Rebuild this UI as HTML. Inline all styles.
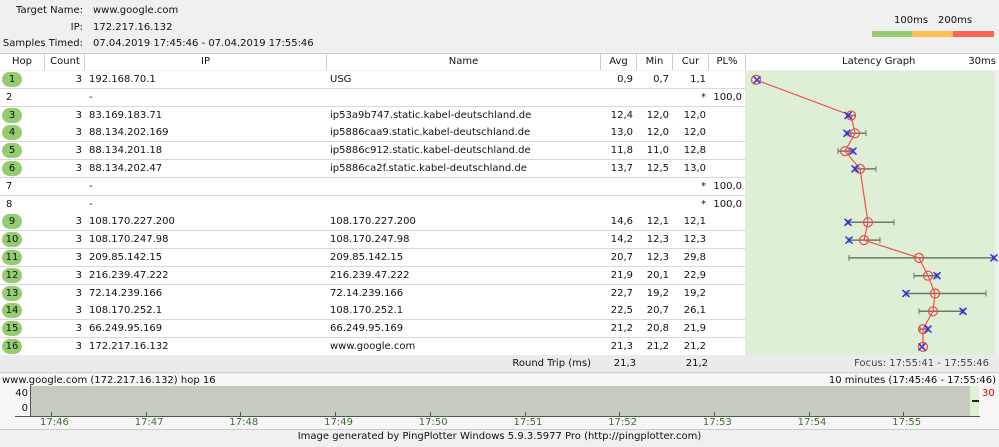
<!DOCTYPE html><html><head><style>
body{margin:0;width:999px;height:447px;background:#f0f0f0;font-family:"DejaVu Sans","Liberation Sans",sans-serif;font-size:10px;color:#111;position:relative;overflow:hidden}
.a{position:absolute;white-space:nowrap}
.r{text-align:right}
.hd{position:absolute;top:54px;height:16px;line-height:16px;background:#fff;text-align:center;border-left:1px solid #ccc}
.row{position:absolute;left:0;width:745px;height:17px;background:#fff;border-bottom:1px solid #d8d8d8}
.c{position:absolute;top:0;line-height:17px}
.g{position:absolute;left:2px;top:1px;width:20px;height:15px;border-radius:8px;background:#95cc70;text-align:center;line-height:15px}
</style></head><body>
<div class="a r" style="right:916px;top:5px">Target Name:</div><div class="a" style="left:93px;top:5px">www.google.com</div>
<div class="a r" style="right:916px;top:22px">IP:</div><div class="a" style="left:93px;top:22px">172.217.16.132</div>
<div class="a r" style="right:916px;top:38px">Samples Timed:</div><div class="a" style="left:93px;top:38px">07.04.2019 17:45:46 - 07.04.2019 17:55:46</div>
<div class="a" style="left:894px;top:15px">100ms</div><div class="a" style="left:938px;top:15px">200ms</div>
<div class="a" style="left:872px;top:31px;width:40px;height:6px;background:#97cc6f"></div>
<div class="a" style="left:912px;top:31px;width:41px;height:6px;background:#fdbd4f"></div>
<div class="a" style="left:953px;top:31px;width:41px;height:6px;background:#fd6552"></div>
<div class="a" style="left:0;top:53px;width:999px;height:1px;background:#ccc"></div>
<div class="hd" style="left:0;width:44px;border:0">Hop</div>
<div class="hd" style="left:44px;width:40px">Count</div>
<div class="hd" style="left:84px;width:241px">IP</div>
<div class="hd" style="left:326px;width:273px">Name</div>
<div class="hd" style="left:600px;width:35px">Avg</div>
<div class="hd" style="left:636px;width:35px">Min</div>
<div class="hd" style="left:672px;width:35px">Cur</div>
<div class="hd" style="left:708px;width:36px">PL%</div>
<div class="hd" style="left:745px;width:254px;text-align:left"><span style="margin-left:96px">Latency Graph</span><span style="position:absolute;right:4px">30ms</span></div>
<div id="rows"></div>
<div class="a" style="left:745px;top:71px;width:250px;height:284px;background:#dfefd6"></div>
<svg class="a" style="left:0;top:0" width="999" height="447" id="gr"></svg>
<div class="a" style="left:0;top:355px;width:999px;height:17px;background:#ebebeb;border-bottom:1px solid #d0d0d0"></div>
<div class="a r" style="right:408px;top:358px">Round Trip (ms)</div>
<div class="a r" style="right:363px;top:358px">21,3</div>
<div class="a r" style="right:291px;top:358px">21,2</div>
<div class="a r" style="right:10px;top:358px;color:#444">Focus: 17:55:41 - 17:55:46</div>
<div class="a" style="left:0;top:374px;width:999px;height:55px;background:#f6f6f6;border-bottom:1px solid #ccc"></div>
<div class="a" style="left:2px;top:375px">www.google.com (172.217.16.132) hop 16</div>
<div class="a r" style="right:3px;top:375px">10 minutes (17:45:46 - 17:55:46)</div>
<div class="a" style="left:31px;top:386px;width:939px;height:30px;background:#c5cbbe"></div>
<div class="a" style="left:970px;top:386px;width:9px;height:30px;background:#dfefd6"></div>
<div class="a" style="left:972px;top:400px;width:7px;height:2px;background:#222"></div>
<div class="a" style="left:982px;top:388px;color:#d00">30</div>
<div class="a r" style="right:971px;top:388px">40</div>
<div class="a r" style="right:971px;top:403px">0</div>
<div class="a" style="left:30px;top:384px;width:1px;height:32px;background:#555"></div>
<div class="a" style="left:15px;top:416px;width:965px;height:1px;background:#555"></div>
<div class="a" style="left:379px;top:0" id="ticks"></div>
<div class="a" style="left:0;top:431px;width:999px;text-align:center">Image generated by PingPlotter Windows 5.9.3.5977 Pro (http://pingplotter.com)</div>
<script>
var d=[[1,1,3,"192.168.70.1","USG","0,9","0,7","1,1",""],[2,0,"","-","","","","*","100,0"],[3,1,3,"83.169.183.71","ip53a9b747.static.kabel-deutschland.de","12,4","12,0","12,0",""],[4,1,3,"88.134.202.169","ip5886caa9.static.kabel-deutschland.de","13,0","12,0","12,0",""],[5,1,3,"88.134.201.18","ip5886c912.static.kabel-deutschland.de","11,8","11,0","12,8",""],[6,1,3,"88.134.202.47","ip5886ca2f.static.kabel-deutschland.de","13,7","12,5","13,0",""],[7,0,"","-","","","","*","100,0"],[8,0,"","-","","","","*","100,0"],[9,1,3,"108.170.227.200","108.170.227.200","14,6","12,1","12,1",""],[10,1,3,"108.170.247.98","108.170.247.98","14,2","12,3","12,3",""],[11,1,3,"209.85.142.15","209.85.142.15","20,7","12,3","29,8",""],[12,1,3,"216.239.47.222","216.239.47.222","21,9","20,1","22,9",""],[13,1,3,"72.14.239.166","72.14.239.166","22,7","19,2","19,2",""],[14,1,3,"108.170.252.1","108.170.252.1","22,5","20,7","26,1",""],[15,1,3,"66.249.95.169","66.249.95.169","21,2","20,8","21,9",""],[16,1,3,"172.217.16.132","www.google.com","21,3","21,2","21,2",""]];
var h="";d.forEach(function(r,i){var t=71+i*17.8;h+='<div class="row" style="top:'+t+'px">'+(r[1]?'<div class="g">'+r[0]+'</div>':'<div class="c" style="left:6px">'+r[0]+'</div>')+'<div class="c r" style="right:663px">'+r[2]+'</div><div class="c" style="left:89px">'+r[3]+'</div><div class="c" style="left:330px">'+r[4]+'</div><div class="c r" style="right:112px">'+r[5]+'</div><div class="c r" style="right:76px">'+r[6]+'</div><div class="c r" style="right:39px">'+r[7]+'</div><div class="c r" style="right:3px">'+r[8]+'</div></div>'});
document.getElementById("rows").innerHTML=h;
var p=[[1,756,757,0,0],[3,851,848,848,855],[4,855,847,847,866],[5,845,853,838,853],[6,860,855,855,876],[9,868,848,848,894],[10,864,849,849,880],[11,919,994,849,994],[12,928,937,914,937],[13,935,906,906,986],[14,933,963,919,963],[15,923,928,920,928],[16,923,922,0,0]];
var s="",pts=[];p.forEach(function(q){var y=71+(q[0]-0.5)*17.8;pts.push(q[1]+","+y);if(q[3])s+='<line x1="'+q[3]+'" y1="'+y+'" x2="'+q[4]+'" y2="'+y+'" stroke="#6b7a66" stroke-width="1.5"/><line x1="'+q[3]+'" y1="'+(y-3)+'" x2="'+q[3]+'" y2="'+(y+3)+'" stroke="#6b7a66"/><line x1="'+q[4]+'" y1="'+(y-3)+'" x2="'+q[4]+'" y2="'+(y+3)+'" stroke="#6b7a66"/>';});
s+='<polyline points="'+pts.join(" ")+'" fill="none" stroke="#f05050" stroke-width="1.2"/>';
p.forEach(function(q){var y=71+(q[0]-0.5)*17.8;s+='<circle cx="'+q[1]+'" cy="'+y+'" r="4.5" fill="none" stroke="#f04848" stroke-width="1.2"/><path d="M'+(q[2]-3.5)+' '+(y-3.5)+'l7 7M'+(q[2]-3.5)+' '+(y+3.5)+'l7 -7" stroke="#3030e0" stroke-width="1.5"/>';});
document.getElementById("gr").innerHTML=s;
var tk="",L=["17:46","17:47","17:48","17:49","17:50","17:51","17:52","17:53","17:54","17:55"];L.forEach(function(l,i){var x=51+i*94.7;tk+='<div class="a" style="left:'+(x-379)+'px;top:412px;width:1px;height:4px;background:#555"></div><div class="a" style="left:'+(x-379-11)+'px;top:417px;color:#3a6e2e">'+l+'</div>'});
document.getElementById("ticks").innerHTML=tk;
</script>
</body></html>
